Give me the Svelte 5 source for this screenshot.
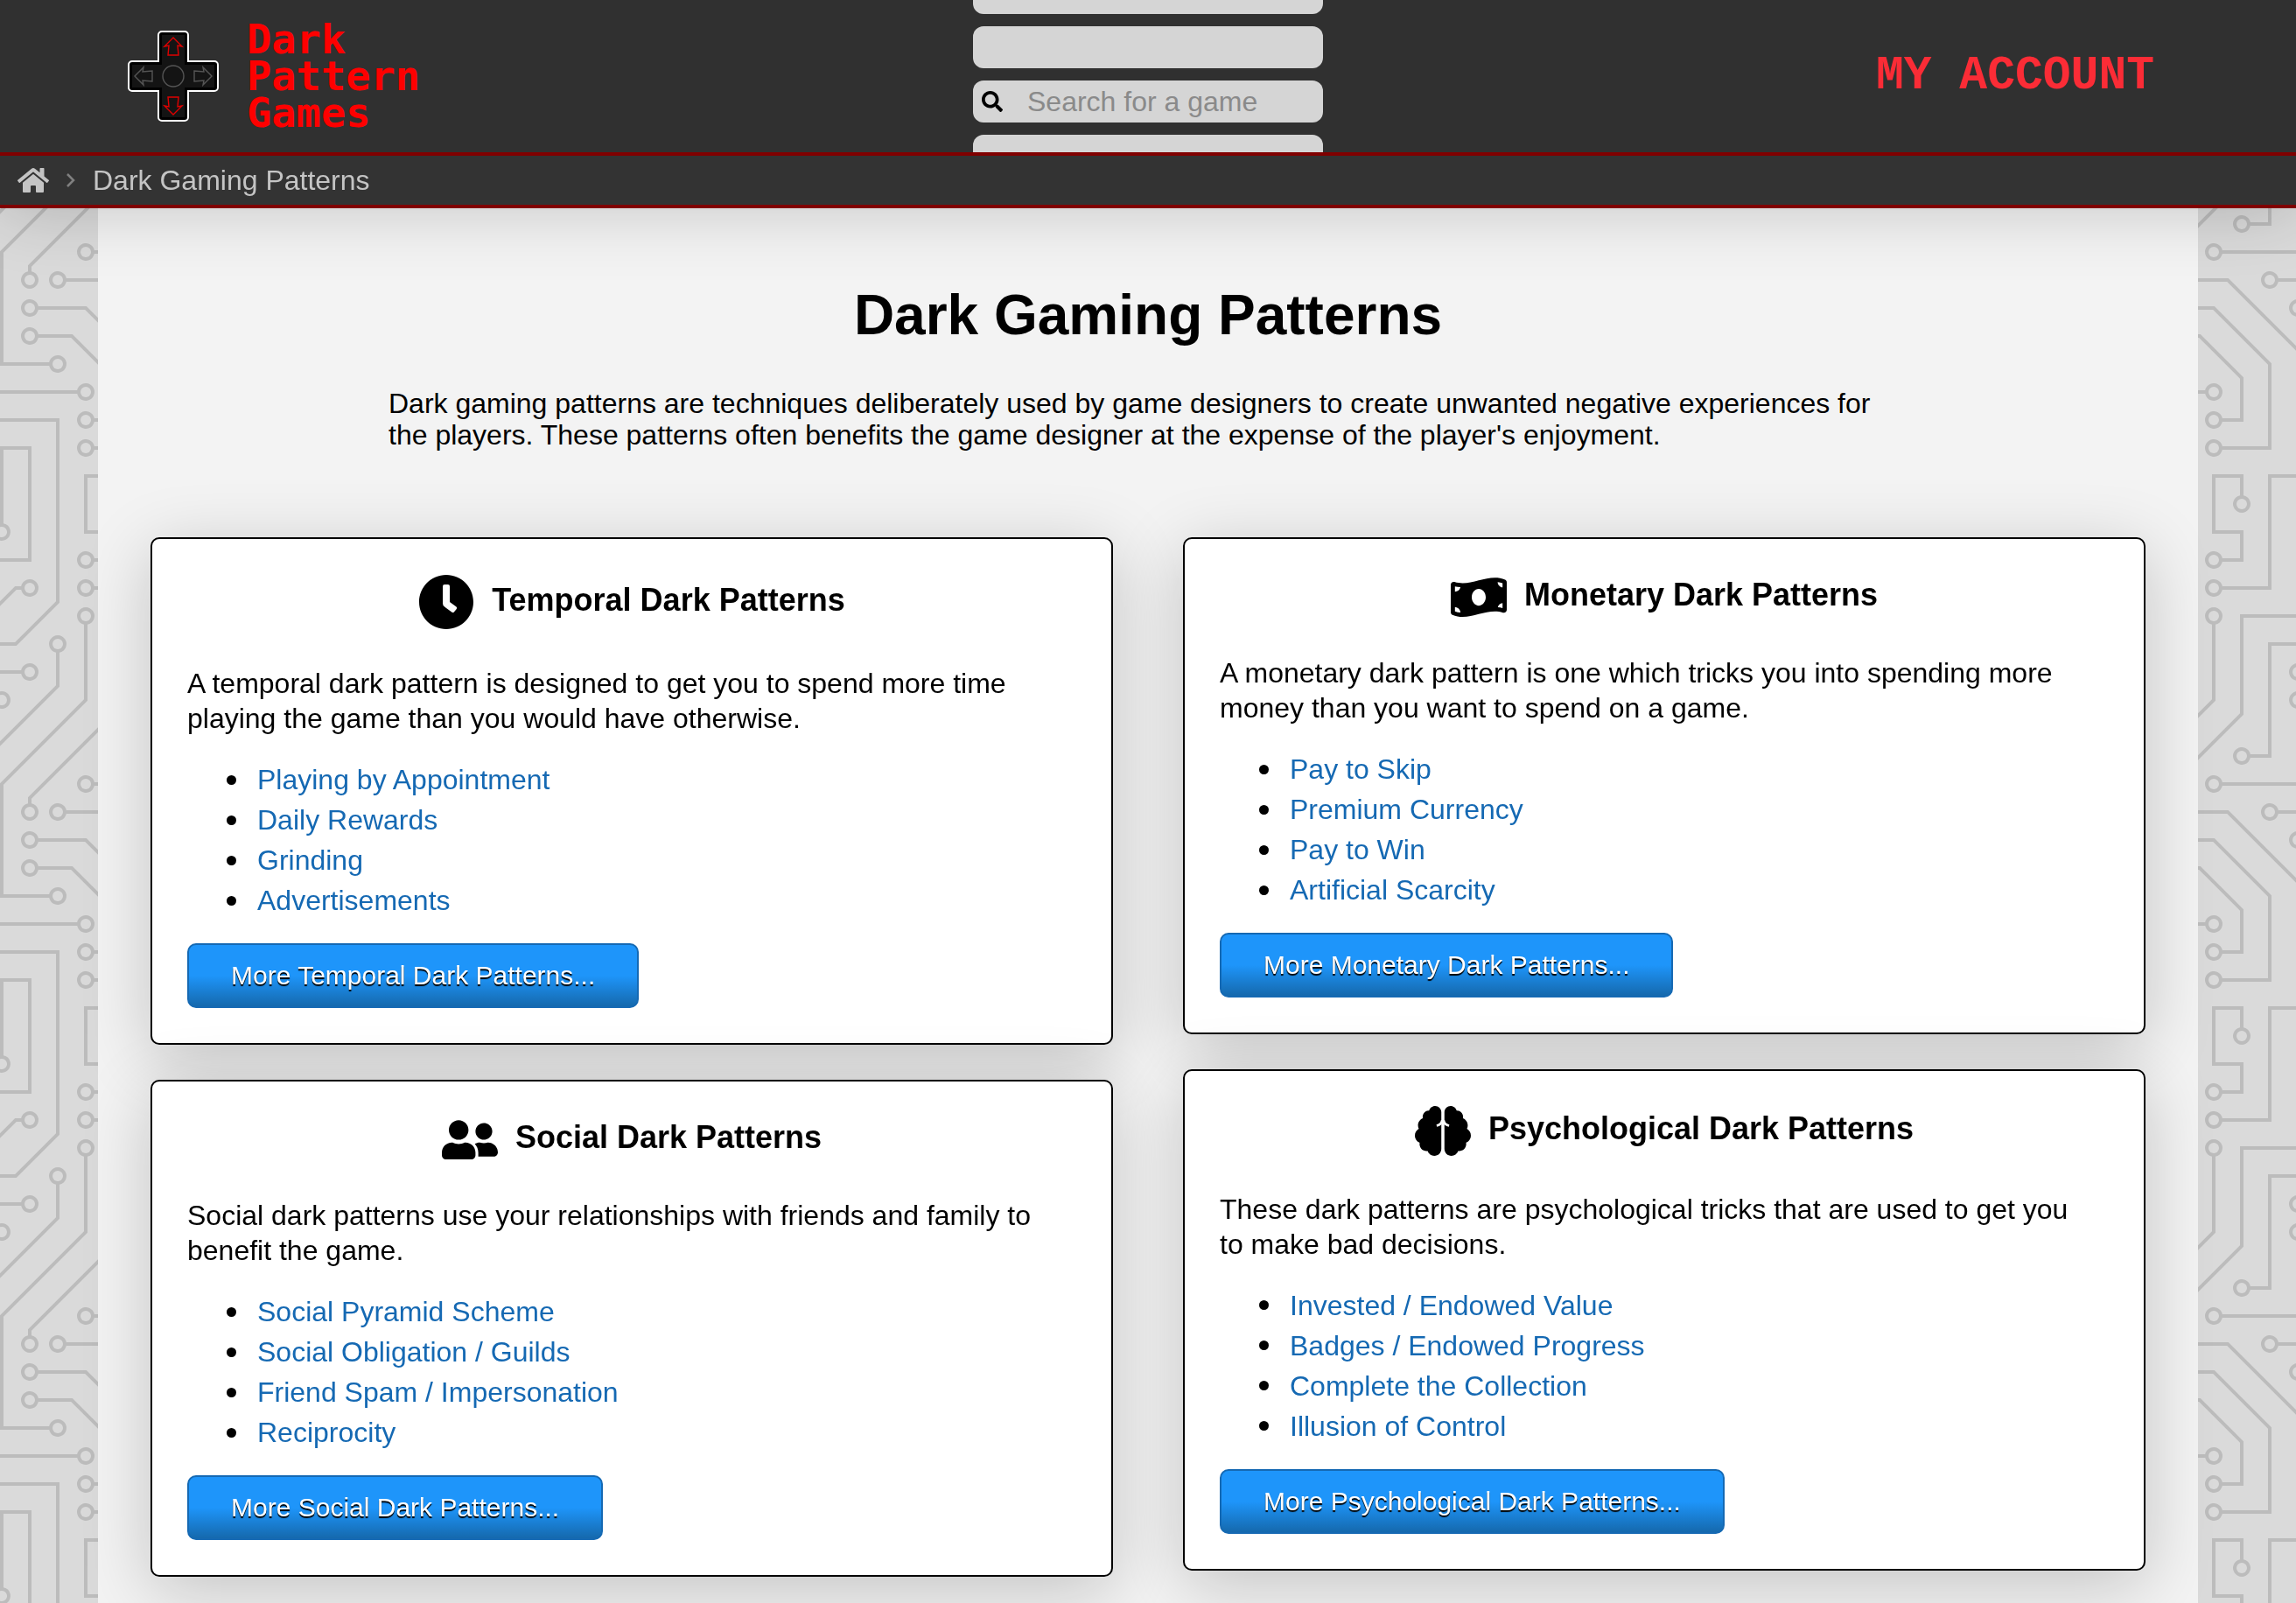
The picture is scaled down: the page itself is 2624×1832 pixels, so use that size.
<script lang="ts">
	type Category = {
		id: string;
		title: string;
		description: string;
		patterns: string[];
		icon: { width: number; path: string; crease?: string };
	};

	const temporal: Category = {
		id: 'temporal',
		title: 'Temporal Dark Patterns',
		description:
			'A temporal dark pattern is designed to get you to spend more time playing the game than you would have otherwise.',
		patterns: ['Playing by Appointment', 'Daily Rewards', 'Grinding', 'Advertisements'],
		icon: {
			width: 512,
			path: 'M256,8C119,8,8,119,8,256S119,504,256,504,504,393,504,256,393,8,256,8Zm92.49,313h0l-20,25a16,16,0,0,1-22.49,2.5h0l-67-49.72a40,40,0,0,1-15-31.23V112a16,16,0,0,1,16-16h32a16,16,0,0,1,16,16V256l58,42.5A16,16,0,0,1,348.49,321Z'
		}
	};

	const social: Category = {
		id: 'social',
		title: 'Social Dark Patterns',
		description:
			'Social dark patterns use your relationships with friends and family to benefit the game.',
		patterns: [
			'Social Pyramid Scheme',
			'Social Obligation / Guilds',
			'Friend Spam / Impersonation',
			'Reciprocity'
		],
		icon: {
			width: 640,
			path: 'M192 256c61.9 0 112-50.1 112-112S253.9 32 192 32 80 82.1 80 144s50.1 112 112 112zm76.8 32h-8.3c-20.8 10-43.9 16-68.5 16s-47.6-6-68.5-16h-8.3C51.6 288 0 339.6 0 403.2V432c0 26.5 21.5 48 48 48h288c26.5 0 48-21.5 48-48v-28.8c0-63.6-51.6-115.2-115.2-115.2zM480 256c53 0 96-43 96-96s-43-96-96-96-96 43-96 96 43 96 96 96zm48 32h-3.8c-13.9 4.8-28.6 8-44.2 8s-30.3-3.2-44.2-8H432c-20.4 0-39.2 5.9-55.7 15.4 24.4 26.3 39.7 61.2 39.7 99.8v38.4c0 2.2-.5 4.3-.6 6.4H592c26.5 0 48-21.5 48-48 0-61.9-50.1-112-112-112z'
		}
	};

	const monetary: Category = {
		id: 'monetary',
		title: 'Monetary Dark Patterns',
		description:
			'A monetary dark pattern is one which tricks you into spending more money than you want to spend on a game.',
		patterns: ['Pay to Skip', 'Premium Currency', 'Pay to Win', 'Artificial Scarcity'],
		icon: {
			width: 640,
			path: 'M621.16 54.46C582.37 38.19 543.55 32 504.75 32c-123.17-.01-246.33 62.34-369.5 62.34-30.89 0-61.76-3.92-92.65-13.72-3.47-1.1-6.95-1.62-10.35-1.62C15.04 79 0 92.32 0 110.81v317.26c0 12.63 7.23 24.6 18.84 29.46C57.63 473.81 96.45 480 135.25 480c123.17 0 246.34-62.35 369.51-62.35 30.89 0 61.76 3.92 92.65 13.72 3.47 1.1 6.95 1.62 10.35 1.62 17.21 0 32.25-13.32 32.25-31.81V83.93c-.01-12.64-7.24-24.6-18.85-29.47zM48 132.22c20.12 5.04 41.12 7.57 62.72 8.93C104.84 170.54 79 192.69 48 192.69v-60.47zm0 285v-47.78c34.37 0 62.18 27.27 63.71 61.4-22.53-1.81-43.59-6.31-63.71-13.62zM320 352c-44.19 0-80-42.99-80-96 0-53.02 35.82-96 80-96s80 42.98 80 96c0 53.03-35.83 96-80 96zm272 27.78c-17.52-4.39-35.71-6.85-54.32-8.44 5.87-26.08 27.5-45.88 54.32-49.28v57.72zm0-236.11c-30.89-3.91-54.86-29.7-55.81-61.55 19.54 2.17 38.09 6.23 55.81 12.66v48.89z'
		}
	};

	const psychological: Category = {
		id: 'psychological',
		title: 'Psychological Dark Patterns',
		description:
			'These dark patterns are psychological tricks that are used to get you to make bad decisions.',
		patterns: [
			'Invested / Endowed Value',
			'Badges / Endowed Progress',
			'Complete the Collection',
			'Illusion of Control'
		],
		icon: {
			width: 576,
			path: 'M208 0c-29.9 0-54.7 20.5-61.8 48.2-.8 0-1.4-.2-2.2-.2-35.3 0-64 28.7-64 64 0 4.8.6 9.5 1.7 14C52.5 138 32 166.6 32 200c0 12.6 3.2 24.3 8.3 34.9C16.3 248.7 0 274.3 0 304c0 33.3 20.4 61.9 49.4 73.9-.9 4.6-1.4 9.3-1.4 14.1 0 39.8 32.2 72 72 72 4.1 0 8.1-.5 12-1.2 9.6 28.5 36.2 49.2 68 49.2 39.8 0 72-32.2 72-72V64c0-35.3-28.7-64-64-64zm368 304c0-29.7-16.3-55.3-40.3-69.1 5.2-10.6 8.3-22.3 8.3-34.9 0-33.4-20.5-62-49.7-74 1-4.5 1.7-9.2 1.7-14 0-35.3-28.7-64-64-64-.8 0-1.5.2-2.2.2C422.7 20.5 397.9 0 368 0c-35.3 0-64 28.6-64 64v376c0 39.8 32.2 72 72 72 31.8 0 58.4-20.7 68-49.2 3.9.7 7.9 1.2 12 1.2 39.8 0 72-32.2 72-72 0-4.8-.5-9.5-1.4-14.1 29-12 49.4-40.6 49.4-73.9z',
			crease: 'M224 202q44-10 54-46h20q10 36 54 46'
		}
	};

	const columns = [
		[temporal, social],
		[monetary, psychological]
	];

	// d-pad arrow, pointing up; the other three are rotations around the centre
	const arrow = '52,8 62,18 57,17 58,28 46,28 47,17 42,18';
	const arrows = [
		{ angle: 0, hot: true },
		{ angle: 90, hot: false },
		{ angle: 180, hot: true },
		{ angle: 270, hot: false }
	];

	const traces =
		'M44.1 224a5 5 0 1 1 0 2H0v-2h44.1zm160 48a5 5 0 1 1 0 2H82v-2h122.1zm57.8-46a5 5 0 1 1 0-2H304v2h-42.1zm0 16a5 5 0 1 1 0-2H304v2h-42.1zm6.2-114a5 5 0 1 1 0 2h-86.2a5 5 0 1 1 0-2h86.2zm-256-48a5 5 0 1 1 0 2H0v-2h12.1zm185.8 34a5 5 0 1 1 0-2h86.2a5 5 0 1 1 0 2h-86.2zM258 12.1a5 5 0 1 1-2 0V0h2v12.1zm-64 208a5 5 0 1 1-2 0v-54.2a5 5 0 1 1 2 0v54.2zm48-198.2V80h62v2h-64V21.9a5 5 0 1 1 2 0zm16 16V64h46v2h-48V37.9a5 5 0 1 1 2 0zm-128 96V208h16v12.1a5 5 0 1 1-2 0V210h-16v-76.1a5 5 0 1 1 2 0zm-5.9-21.9a5 5 0 1 1 0 2H114v48H85.9a5 5 0 1 1 0-2H112v-48h12.1zm-6.2 130a5 5 0 1 1 0-2H176v-74.1a5 5 0 1 1 2 0V242h-60.1zm-16-64a5 5 0 1 1 0-2H114v48h10.1a5 5 0 1 1 0 2H112v-48h-10.1zM66 284.1a5 5 0 1 1-2 0V274H50v30h-2v-32h18v12.1zM236.1 176a5 5 0 1 1 0 2H226v94h48v32h-2v-30h-48v-98h12.1zm25.8-30a5 5 0 1 1 0-2H274v44.1a5 5 0 1 1-2 0V146h-10.1zm-64 96a5 5 0 1 1 0-2H208v-80h16v-14h-42.1a5 5 0 1 1 0-2H226v18h-16v80h-12.1zm86.2-210a5 5 0 1 1 0 2H272V0h2v32h10.1zM98 101.9V146H53.9a5 5 0 1 1 0-2H96v-42.1a5 5 0 1 1 2 0zM53.9 34a5 5 0 1 1 0-2H80V0h2v34H53.9zm60.1 3.9V66H82v64H69.9a5 5 0 1 1 0-2H80V64h32V37.9a5 5 0 1 1 2 0zM101.9 82a5 5 0 1 1 0-2H128V37.9a5 5 0 1 1 2 0V82h-28.1zm16-64a5 5 0 1 1 0-2H146v44.1a5 5 0 1 1-2 0V18h-26.1zm102.2 270a5 5 0 1 1 0 2H98v14h-2v-16h124.1zM242 149.9V160h16v34h-16v62h48v48h-2v-46h-48v-66h16v-30h-16v-12.1a5 5 0 1 1 2 0zM53.9 18a5 5 0 1 1 0-2H64V2H48V0h18v18H53.9zm112 32a5 5 0 1 1 0-2H192V0h50v2h-48v48h-28.1zm-48-48a5 5 0 0 1-9.8-2h2.07a3 3 0 1 0 5.66 0H178v34h-18V21.9a5 5 0 1 1 2 0V32h14V2h-58.1zm0 96a5 5 0 1 1 0-2H137l32-32h39V21.9a5 5 0 1 1 2 0V66h-40.17l-32 32H117.9zm28.1 90.1a5 5 0 1 1-2 0v-76.51L175.59 80H224V21.9a5 5 0 1 1 2 0V82h-49.59L146 112.41v75.69zm16 32a5 5 0 1 1-2 0v-99.51L184.59 96H300.1a5 5 0 0 1 3.9-3.9v2.07a3 3 0 0 0 0 5.66v2.07a5 5 0 0 1-3.9-3.9H185.41L162 121.41v98.69zm-144-64a5 5 0 1 1-2 0v-3.51l48-48V48h32V0h2v50H66v55.41l-48 48v2.69zM50 53.9v43.51l-48 48V208h26.1a5 5 0 1 1 0 2H0v-65.41l48-48V53.9a5 5 0 1 1 2 0zm-16 16V89.41l-34 34v-2.82l32-32V69.9a5 5 0 1 1 2 0zM12.1 32a5 5 0 1 1 0 2H9.41L0 43.41V40.6L8.59 32h3.51zm265.8 18a5 5 0 1 1 0-2h18.69l7.41-7.41v2.82L297.41 50H277.9zm-16 160a5 5 0 1 1 0-2H288v-71.41l16-16v2.82l-14 14V210h-28.1zm-208 32a5 5 0 1 1 0-2H64v-22.59L40.59 194H21.9a5 5 0 1 1 0-2H41.41L66 216.59V242H53.9zm150.2 14a5 5 0 1 1 0 2H96v-56.6L56.6 162H37.9a5 5 0 1 1 0-2h19.5L98 200.6V256h106.1zm-150.2 2a5 5 0 1 1 0-2H80v-46.59L48.59 178H21.9a5 5 0 1 1 0-2H49.41L82 208.59V258H53.9zM34 39.8v1.61L9.41 66H0v-2h8.59L32 40.59V0h2v39.8zM2 300.1a5 5 0 0 1 3.9 3.9H3.83A3 3 0 0 0 0 302.17V256h18v48h-2v-46H2v42.1zM34 241v63h-2v-62H0v-2h34v1zM17 18H0v-2h16V0h2v18h-1zm273-2h14v2h-16V0h2v16zm-32 273v15h-2v-14h-14v14h-2v-16h18v1zM0 92.1A5.02 5.02 0 0 1 6 97a5 5 0 0 1-6 4.9v-2.07a3 3 0 1 0 0-5.66V92.1zM80 272h2v32h-2v-32zm37.9 32h-2.07a3 3 0 0 0-5.66 0h-2.07a5 5 0 0 1 9.8 0zM5.9 0A5.02 5.02 0 0 1 0 5.9V3.83A3 3 0 0 0 3.83 0H5.9zm294.2 0h2.07A3 3 0 0 0 304 3.83V5.9a5 5 0 0 1-3.9-5.9zm3.9 300.1v2.07a3 3 0 0 0-1.83 1.83h-2.07a5 5 0 0 1 3.9-3.9z';

	// centres of the solder pads, keyed by x
	const padRows: Record<number, number[]> = {
		17: [33, 81, 161, 177, 193],
		33: [65, 161, 209],
		49: [17, 33, 49, 145, 225, 241, 257],
		65: [129, 289],
		81: [161],
		97: [81, 97, 177],
		113: [17, 33, 97, 241],
		129: [33, 113, 129, 225],
		145: [65, 193, 225],
		161: [17, 49, 225],
		177: [129, 145, 161],
		193: [113, 161, 225, 241],
		209: [17, 257, 273],
		225: [17, 289],
		241: [17, 145, 177],
		257: [17, 33, 145, 209, 225, 241],
		273: [49, 129, 193],
		289: [33, 113]
	};
	const pads = Object.entries(padRows).flatMap(([x, ys]) => ys.map((y) => ({ x: Number(x), y })));

	let query = $state('');
</script>

<svg class="circuit" aria-hidden="true">
	<defs>
		<pattern
			id="circuit"
			width="304"
			height="304"
			patternUnits="userSpaceOnUse"
			patternTransform="translate(0 -2) scale(2)"
		>
			<path class="trace" d={traces} />
			{#each pads as pad (`${pad.x}-${pad.y}`)}
				<circle class="pad" cx={pad.x} cy={pad.y} r="3" />
			{/each}
		</pattern>
	</defs>
	<rect width="100%" height="100%" fill="url(#circuit)" />
</svg>

<div class="page">
	<div class="top">
		<header>
			<a class="logo" href="/">
				<svg width="104" height="104" viewBox="0 0 104 104" aria-hidden="true">
					<path
						class="pad-body"
						d="M39 1h26a4 4 0 0 1 4 4v30h30a4 4 0 0 1 4 4v26a4 4 0 0 1-4 4H69v30a4 4 0 0 1-4 4H39a4 4 0 0 1-4-4V69H5a4 4 0 0 1-4-4V39a4 4 0 0 1 4-4h30V5a4 4 0 0 1 4-4z"
					/>
					<path class="pad-face" d="M39 5h26v34h34v26H65v34H39V65H5V39h34z" />
					<circle class="pad-line" cx="52" cy="52" r="12" />
					{#each arrows as a (a.angle)}
						<polygon
							class="pad-line"
							class:hot={a.hot}
							points={arrow}
							transform="rotate({a.angle} 52 52)"
						/>
					{/each}
				</svg>
				<span>Dark<br />Pattern<br />Games</span>
			</a>

			<form class="search" role="search" onsubmit={(e) => e.preventDefault()}>
				<div class="slot"></div>
				<div class="slot"></div>
				<div class="slot field">
					<label for="game-search" aria-label="Search for a game">
						<svg width="24" height="24" viewBox="0 0 512 512" aria-hidden="true">
							<path
								d="M505 442.7L405.3 343c-4.5-4.5-10.6-7-17-7H372c27.6-35.3 44-79.7 44-128C416 93.1 322.9 0 208 0S0 93.1 0 208s93.1 208 208 208c48.3 0 92.7-16.4 128-44v16.3c0 6.4 2.5 12.5 7 17l99.7 99.7c9.4 9.4 24.6 9.4 33.9 0l28.3-28.3c9.4-9.4 9.4-24.6.1-34zM208 336c-70.7 0-128-57.2-128-128 0-70.7 57.2-128 128-128 70.7 0 128 57.2 128 128 0 70.7-57.2 128-128 128z"
							/>
						</svg>
					</label>
					<input id="game-search" type="text" placeholder="Search for a game" bind:value={query} />
				</div>
				<div class="slot"></div>
			</form>

			<a class="account" href="/account">MY ACCOUNT</a>
		</header>

		<nav aria-label="Breadcrumb">
			<a href="/" aria-label="Home">
				<svg width="36" height="32" viewBox="0 0 576 512" aria-hidden="true">
					<path
						d="M280.37 148.26L96 300.11V464a16 16 0 0 0 16 16l112.06-.29a16 16 0 0 0 15.92-16V368a16 16 0 0 1 16-16h64a16 16 0 0 1 16 16v95.64a16 16 0 0 0 16 16.05L464 480a16 16 0 0 0 16-16V300L295.67 148.26a12.19 12.19 0 0 0-15.3 0zM571.6 251.47L488 182.56V44.05a12 12 0 0 0-12-12h-56a12 12 0 0 0-12 12v72.61L318.47 43a48 48 0 0 0-61 0L4.34 251.47a12 12 0 0 0-1.6 16.9l25.5 31A12 12 0 0 0 45.15 301l235.22-193.74a12.19 12.19 0 0 1 15.3 0L530.9 301a12 12 0 0 0 16.9-1.6l25.5-31a12 12 0 0 0-1.7-16.93z"
					/>
				</svg>
			</a>
			<svg class="chevron" width="10" height="18" viewBox="0 0 10 18" aria-hidden="true">
				<path d="M1 2l7 7-7 7" />
			</svg>
			<span>Dark Gaming Patterns</span>
		</nav>
	</div>

	<main>
		<h1>Dark Gaming Patterns</h1>
		<p class="intro">
			Dark gaming patterns are techniques deliberately used by game designers to create unwanted
			negative experiences for the players. These patterns often benefits the game designer at the
			expense of the player's enjoyment.
		</p>

		<div class="columns">
			{#each columns as column, i (i)}
				<div class="column">
					{#each column as category (category.id)}
						<section class="card">
							<h2>
								<svg viewBox="0 0 {category.icon.width} 512" aria-hidden="true">
									<path d={category.icon.path} />
									{#if category.icon.crease}
										<path class="crease" d={category.icon.crease} />
									{/if}
								</svg>{category.title}
							</h2>
							<p>{category.description}</p>
							<ul>
								{#each category.patterns as pattern (pattern)}
									<li><a href="#{category.id}">{pattern}</a></li>
								{/each}
							</ul>
							<a class="more" href="/patterns/{category.id}">More {category.title}...</a>
						</section>
					{/each}
				</div>
			{/each}
		</div>
	</main>
</div>

<style>
	:global(body) {
		background: #dadada;
		font-family: 'Liberation Sans', Arial, sans-serif;
		font-size: 32px;
		color: #000;
	}

	.circuit {
		position: fixed;
		inset: 0;
		width: 100%;
		height: 100%;
		z-index: -1;
	}

	.trace {
		fill: #bcbcbc;
	}

	.pad {
		fill: #dadada;
	}

	.page {
		display: flex;
		flex-direction: column;
		min-height: 100vh;
	}

	.top {
		position: relative;
		z-index: 1;
		box-shadow: 0 0 80px rgba(0, 0, 0, 0.2);
	}

	header {
		display: grid;
		grid-template: 100% / 1fr 400px 1fr;
		align-items: center;
		height: 174px;
		padding: 0 146px;
		overflow: hidden;
		background: #303030;
		border-bottom: 4px solid #800000;
	}

	.logo {
		display: flex;
		align-items: center;
		gap: 32px;
		font: bold 47px/42px 'DejaVu Sans Mono', monospace;
		color: #f00;
		text-decoration: none;
	}

	.pad-body {
		fill: #000;
		stroke: #fff;
		stroke-width: 2;
	}

	.pad-face {
		fill: #141414;
	}

	.pad-line {
		fill: none;
		stroke: #555;
		stroke-width: 1.4;
	}

	.pad-line.hot {
		stroke: #e00000;
	}

	.search {
		display: flex;
		flex-direction: column;
		gap: 14px;
		padding-bottom: 4px;
	}

	.slot {
		height: 48px;
		border-radius: 12px;
		background: #d5d5d5;
	}

	.field {
		display: flex;
		align-items: center;
	}

	.field label {
		display: flex;
		padding: 0 28px 0 10px;
	}

	.field input {
		flex: 1;
		min-width: 0;
		height: 48px;
		padding: 0;
		border: 0;
		outline: 0;
		background: none;
		font: inherit;
	}

	.field input::placeholder {
		color: #8a8a8a;
		opacity: 1;
	}

	.account {
		justify-self: end;
		padding-right: 16px;
		font: bold 53px/60px 'Liberation Mono', monospace;
		color: #fb2c36;
		text-decoration: none;
	}

	nav {
		display: flex;
		align-items: center;
		height: 56px;
		gap: 20px;
		padding: 0 20px;
		background: #333;
		border-bottom: 4px solid #800000;
		color: #c4c4c4;
	}

	nav a {
		display: flex;
	}

	nav a svg {
		fill: #c4c4c4;
	}

	.chevron path {
		fill: none;
		stroke: #808080;
		stroke-width: 2.5;
	}

	main {
		flex: 1;
		box-sizing: border-box;
		width: 100%;
		max-width: 2400px;
		margin: 0 auto;
		padding: 86px 60px 28px;
		background: #f3f3f3;
	}

	h1 {
		margin: 0 0 47px;
		font-size: 64px;
		line-height: 72px;
		text-align: center;
	}

	.intro {
		max-width: 1736px;
		margin: 0 auto 99px;
		line-height: 36px;
	}

	.columns {
		display: grid;
		grid-template-columns: 1fr 1fr;
		align-items: start;
		gap: 80px;
	}

	.column {
		display: flex;
		flex-direction: column;
		gap: 40px;
	}

	.card {
		padding: 40px;
		border: 2px solid #000;
		border-radius: 10px;
		background: #fff;
		box-shadow: 0 16px 80px rgba(0, 0, 0, 0.2);
	}

	h2 {
		margin: 0 0 41px;
		font-size: 36px;
		line-height: 48px;
		text-align: center;
	}

	h2 svg {
		width: 64px;
		height: auto;
		margin-right: 20px;
		vertical-align: middle;
	}

	.crease {
		fill: none;
		stroke: #fff;
		stroke-width: 24;
	}

	.card p {
		margin: 0 0 27px;
		padding-right: 24px;
		line-height: 40px;
	}

	ul {
		margin: 0 0 26px;
		padding-left: 45px;
		line-height: 46px;
		list-style: none;
	}

	li {
		display: flex;
		align-items: center;
		gap: 24px;
	}

	li::before {
		content: '';
		width: 11px;
		height: 11px;
		border-radius: 50%;
		background: #000;
	}

	li a {
		color: #1569b3;
		text-decoration: none;
	}

	.more {
		display: block;
		width: fit-content;
		padding: 18px 48px;
		border: 2px solid #1569b3;
		border-radius: 10px;
		background: linear-gradient(#1e95fa 50%, #1569ad);
		font-size: 30px;
		line-height: 34px;
		color: #fff;
		text-decoration: none;
		text-shadow: 0 2px 1px #000;
	}
</style>
